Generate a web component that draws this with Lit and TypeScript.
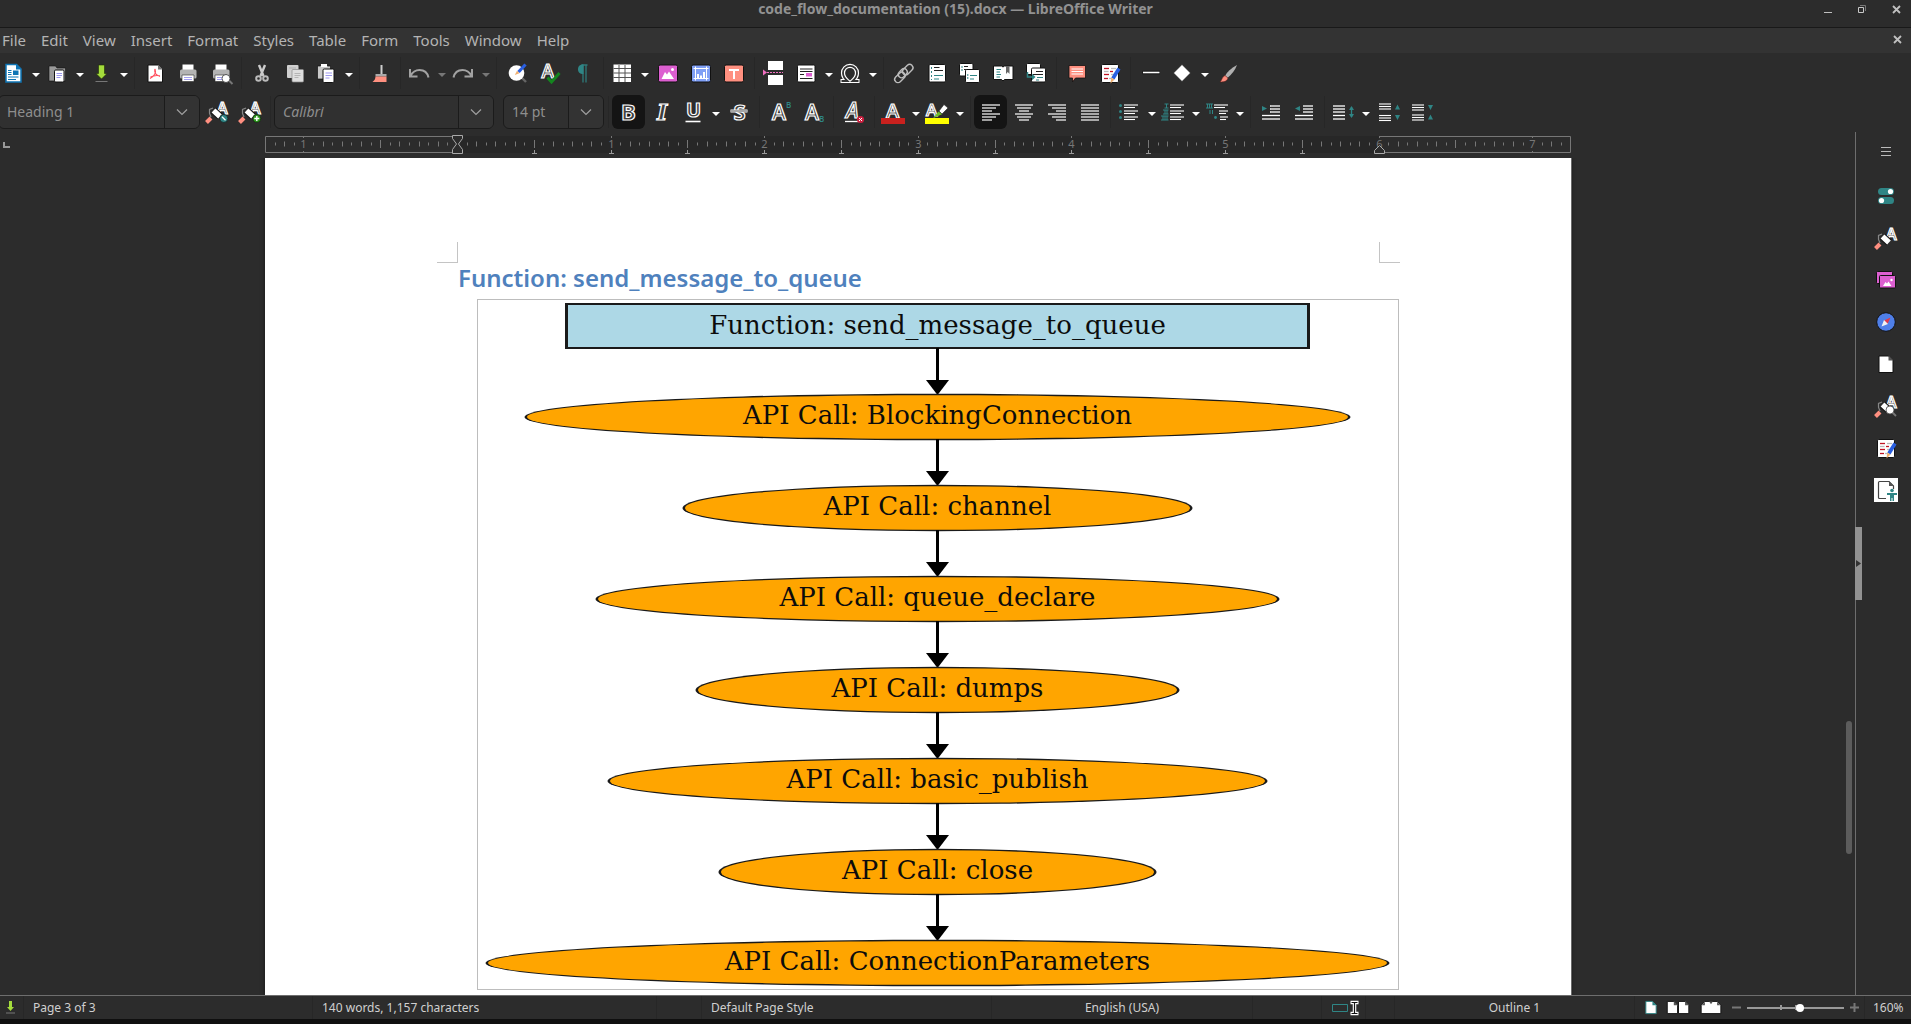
import { LitElement, html, svg, css, nothing, TemplateResult } from "lit";
import { customElement, property } from "lit/decorators.js";
import { classMap } from "lit/directives/class-map.js";

const outlined = (ch: string, x: number, y: number, size: number, extra = "") =>
  svg`<text class="glyph ${extra}" x=${x} y=${y} font-size=${size}>${ch}</text>`;

const page = (x: number, y: number, w: number, h: number, fill = "#fff") =>
  svg`<rect x=${x} y=${y} width=${w} height=${h} rx="1.2" fill=${fill} stroke="#111" stroke-width="1"/>`;

const lines = (rows: number[][], color: string, width = 1) =>
  rows.map(([x1, x2, y]) => svg`<path d="M${x1} ${y}H${x2}" stroke=${color} stroke-width=${width}/>`);

const pencil = svg`
  <path d="M19.500 6.500l3 2-6 10-3.200-2z" fill="#2a5fe0"/>
  <path d="M13.300 16.500l3.200 2-4 4z" fill="#f0b070"/>`;

const roller = svg`
  <path d="M6 17L4.500 13.500V9.500L8 8" fill="none" stroke="#888" stroke-width="1.200"/>
  <path d="M1.500 22.500L6 18" stroke="#ff8f80" stroke-width="4"/>
  <path d="M8.500 10.500L15 16.500" stroke="#111" stroke-width="7.500"/>
  <path d="M8.500 10.500L15 16.500" stroke="#fff" stroke-width="5.500"/>`;

const printer = svg`
  <path d="M6.500 3.500h11V9h-11z" fill="#fff"/>
  <rect x="4" y="8.500" width="16.500" height="9" rx="1.5" fill="#b3b3b3"/>
  <path d="M6 14h12v6.500H6z" fill="#fff" stroke="#2c2c2c" stroke-width=".6"/>
  <path d="M8 16.500h8M8 18.500h8" stroke="#a5a0f0"/>`;

const GREEN = "#2f8585";

const ICONS: Record<string, TemplateResult> = {
  newdoc: svg`
    <path d="M5 3.500h10.500L20 8v13H5z" fill="#fff" stroke="#0f75b5" stroke-width="1.500"/>
    <path d="M15 3l5.500 5.500H15z" fill="#0f75b5"/>
    <path d="M12 9.500h5.500V14H12z" fill="#0f75b5"/>
    <path d="M7 9.500h3.500M7 11.500h3.500M7 13.500h3.500M7 16h10.500M7 18.500h8" stroke="#0f75b5"/>`,
  open: svg`
    <path d="M4 5h6.500l1.500 2h8.500v13H4z" fill="#999" stroke="#111" stroke-width=".6"/>
    ${page(9.5, 9, 9.5, 12)}
    <path d="M11.500 12.500h5.500M11.500 14.500h5.500M11.500 16.500h4" stroke="#9c97ee"/>`,
  save: svg`
    <path d="M9.500 4h6v8.500h2.500L12.500 18 7 12.500h2.500z" fill="#a4dc3c" stroke="#1d2b05" stroke-width=".6"/>
    <path d="M6.500 20.500h12" stroke="#777"/>`,
  pdf: svg`
    <path d="M5 4h10.500l4 4v13H5z" fill="#fff" stroke="#111"/>
    <path d="M15 3.800l4.700 4.700H15z" fill="#777"/>
    <path d="M12 8c-1 3 .5 6 5 7.500M12 8c1.500 4-1.500 7.500-5 9.500M7.500 16c3-1.500 6-2 9.500-1.200" fill="none" stroke="#ff4d5c" stroke-width="1.100"/>`,
  print: printer,
  preview: svg`${printer}<path d="M20 19.500l3.500 3.500" stroke="#777" stroke-width="2"/><circle cx="17" cy="17.500" r="4" fill="#fff" stroke="#333" stroke-width=".8"/>`,
  cut: svg`
    <path d="M9 4l4.500 11M15 4l-4.500 11" stroke="#ccc" stroke-width="2.400"/>
    <circle cx="8.500" cy="17.500" r="2.300" fill="none" stroke="#bbb" stroke-width="2"/>
    <circle cx="15.500" cy="17.500" r="2.300" fill="none" stroke="#bbb" stroke-width="2"/>`,
  copy: svg`
    <rect x="4" y="4" width="11.500" height="13" rx="1" fill="#d0d0d0"/>
    <rect x="9" y="8.500" width="11.500" height="12.500" rx="1" fill="#dedede" stroke="#8a8a8a" stroke-width=".7"/>
    <path d="M6 7h7M11.500 12.500h6M11.500 14.500h6M11.500 16.500h4" stroke="#aaa" stroke-width=".8"/>`,
  paste: svg`
    <path d="M3.500 5h3l1.500-1.500h4L13.500 5h3v13h-13z" fill="#c9c9c9" stroke="#111" stroke-width=".7"/>
    <path d="M7 3h6v3H7z" fill="#fff"/>
    ${page(9, 8, 11, 13.5)}
    <path d="M11.500 12h6.500M11.500 14.500h6.500M11.500 17h4" stroke="#9c97ee"/>`,
  clone: svg`
    <path d="M13.500 4v9" stroke="#ccc" stroke-width="2"/>
    <path d="M7.500 15.500v-2.500h11v2.500z" fill="#aaa"/>
    <path d="M7.500 15.500h11v5.500H4.500c2-1.500 2.800-3 3-5.500z" fill="#ff9080"/>`,
  undo: svg`<path d="M3 8v7.500h7.500M3.500 15C6 10 9 9 12.500 9c5 0 8 3 9 7.500" fill="none" stroke="#a2a2a2" stroke-width="2"/>`,
  redo: svg`<path d="M21 8v7.500h-7.500M20.500 15C18 10 15 9 11.500 9c-5 0-8 3-9 7.500" fill="none" stroke="#a2a2a2" stroke-width="2"/>`,
  find: svg`
    <path d="M17 17l4 4" stroke="#666" stroke-width="2.400"/>
    <circle cx="11.500" cy="12" r="7.800" fill="#fff"/>
    <path d="M20.500 3.500l-7 7.500" stroke="#2a5fe0" stroke-width="3.200"/>
    <path d="M14.500 12.200L12 9.800 9.800 14z" fill="#f0b070"/>`,
  spell: svg`${outlined("A", 3.5, 17, 19)}<path d="M9.500 16.500l4 4.500 8-9" fill="none" stroke="#14851f" stroke-width="3"/>`,
  pilcrow: svg`
    <path d="M12 3.500v18M15 3.500v18M10.500 4h6" stroke="#2f7a7a" stroke-width="1.300"/>
    <path d="M12.500 3.500c-4 0-5.500 2-5.500 4.700S8.500 13 12.500 13z" fill="#2f8585"/>`,
  table: svg`
    <rect x="3.500" y="3.500" width="17.500" height="17.500" fill="#fff"/>
    <path d="M3.500 7.500h17.500M3.500 12h17.500M3.500 16.500h17.500M9 4v17M15 4v17" stroke="#555" stroke-width="1"/>`,
  image: svg`
    <rect x="2.500" y="4" width="19" height="17" rx="1.500" fill="#dc5fd0" stroke="#111"/>
    <path d="M5.500 18l3.500-7 2 2.500 2-3 5 7.500z" fill="#fff"/><circle cx="16.500" cy="8.500" r="1.500" fill="#fff"/>`,
  chart: svg`
    <rect x="2.500" y="4" width="19" height="17" rx="1.500" fill="#7f9ff5" stroke="#111"/>
    <path d="M6.500 5.500v14M17.500 5.500v14M4.500 7.500h15M4.500 17.500h15" stroke="#fff"/>
    <path d="M9 17v-4M12 17v-2.500M15 17v-6" stroke="#fff" stroke-width="2"/>`,
  textbox: svg`
    <rect x="2.500" y="4" width="19" height="17" rx="1.500" fill="#ff9080" stroke="#111"/>
    <path d="M7 9h10M12 9v9" stroke="#fff" stroke-width="2"/>`,
  pagebreak: svg`
    <path d="M5 0h15v9H5zM5 14h15v10H5z" fill="#fff"/>
    <path d="M4 11.500h16" stroke="#f06fc0" stroke-dasharray="2 1"/><path d="M0 8.500v6l4-3z" fill="#f06fc0"/>`,
  field: svg`
    <rect x="3.500" y="4" width="17.500" height="17" rx="1.200" fill="#fff" stroke="#111"/>
    <path d="M6 8h12.500M6 10.500h12.500M6 13.500h4M6 17.500h12.500" stroke="#222" stroke-width="1.100"/>
    <path d="M12 12h6v3.500h-6z" fill="#dc5fd0"/>`,
  omega: svg`
    <path d="M2.500 20h7c-3-2.500-4.500-5-4.500-8a7 7.200 0 0114 0c0 3-1.500 5.500-4.500 8h7" fill="none" stroke="#fff" stroke-width="4.200"/>
    <path d="M3.500 20h6c-3-2.500-4.500-5-4.500-8a7 7.200 0 0114 0c0 3-1.500 5.500-4.500 8h6" fill="none" stroke="#333" stroke-width="1.800"/>`,
  link: svg`
    <g transform="rotate(-45 12 12)" fill="none" stroke="#bdbdbd" stroke-width="1.400">
      <rect x="0" y="9" width="12" height="6.500" rx="3.200"/><rect x="6" y="8" width="10" height="6.500" rx="3.200"/>
      <rect x="11" y="9" width="12" height="6.500" rx="3.200"/></g>`,
  footnote: svg`${page(4, 3.5, 16.5, 17.5)}
    ${lines([[9, 14.5, 6.5], [9, 18, 9.5]], "#222")}${lines([[9, 18, 14.5], [9, 14, 18]], GREEN)}
    <path d="M6.500 6v13" stroke="#2f8585" stroke-dasharray="2 2"/>`,
  endnote: svg`${page(1.5, 2.5, 13.5, 12.5)}${lines([[6, 10, 5.5], [6, 13, 8.5]], "#222")}
    ${page(7.5, 8.5, 14, 13)}${lines([[12, 19, 14.5], [12, 16, 18]], GREEN)}
    <path d="M4 5v5M9.800 13v6" stroke="#2f8585" stroke-dasharray="2 1"/>`,
  bookmark: svg`
    <path d="M2.500 5h8l1.500 1 1.500-1h8.500v13.500h-8.500L12 20l-1.500-1.500h-8z" fill="#fff" stroke="#111"/>
    ${lines([[5.5, 10, 8.5], [5.5, 9, 11], [5.5, 10, 13.5], [5.5, 9, 16]], GREEN)}
    <path d="M15 5h3.500v8l-1.700-2-1.800 2z" fill="#666"/>`,
  crossref: svg`${page(2.5, 2.5, 14, 11)}${page(7.5, 7, 14, 14)}
    ${lines([[12, 19, 10.5], [9, 19, 13.5]], "#222")}${lines([[13, 19, 16.5], [12, 15, 19]], GREEN)}
    <path d="M3.500 11v5H9" fill="none" stroke="#2f8585" stroke-width="1.500"/><path d="M8 12.800v6.400l3.500-3.200z" fill="#2f8585"/>`,
  comment: svg`
    <path d="M4 4.500h16.500v12.500h-10l-3 4v-4H4z" fill="#ff9080" stroke="#111" stroke-width=".8"/>
    ${lines([[6.5, 18, 8], [6.5, 18, 10.5], [6.5, 18, 13]], "#fff")}`,
  track: svg`${page(3.5, 3.5, 17, 18)}
    ${lines([[6, 11, 7.5], [12, 15, 10.5], [6, 11, 13.5], [6, 10, 17.5]], "#c01525", 1.3)}
    ${lines([[13, 18, 7.5], [6, 10.5, 10.5], [13, 17, 13.5], [11, 14, 17.5]], "#bbb", 1.3)}${pencil}`,
  line: svg`<path d="M3.500 11.500h17.500" stroke="#111" stroke-width="3.500"/><path d="M4 11.500h16.500" stroke="#fff" stroke-width="1.600"/>`,
  shapes: svg`<path d="M12 3.500l8.500 8.500-8.500 8.500L3.500 12z" fill="#fff" stroke="#111" stroke-width=".6"/>`,
  brush: svg`
    <path d="M21 4C15 7 11 11 9 15l2.500 2C16 13 19 9.500 21 4z" fill="#b0b0b0"/>
    <path d="M9 14.500l3 2.500c-1 3.500-4 4-8 4 2-1.500 2-5.500 5-6.500z" fill="#ff8f80" stroke="#5b1d18" stroke-width=".6"/>`,
  styleUpdate: svg`${outlined("A", 12, 13.5, 16)}${roller}
    <circle cx="18.800" cy="18.500" r="4" fill="#2f8585" stroke="#111" stroke-width=".6"/><path d="M17 16.800l3.500 3.500" stroke="#fff" stroke-width="1.300"/>`,
  styleNew: svg`${outlined("A", 12, 13.5, 16)}${roller}
    <circle cx="18.800" cy="18.500" r="4" fill="#2c9a1c" stroke="#111" stroke-width=".6"/><path d="M16.300 18.500h5M18.800 16v5" stroke="#fff" stroke-width="1.400"/>`,
  bold: outlined("B", 4, 20, 22, "heavy"),
  italic: outlined("I", 7, 20, 22, "serif ital"),
  underline: svg`${outlined("U", 5, 17, 20, "heavy")}<path d="M4.500 21.500h15" stroke="#fff" stroke-width="1.600"/>`,
  strike: svg`${outlined("S", 6.5, 20, 22, "heavy")}<path d="M3.500 11h17" stroke="#fff" stroke-width="3"/><path d="M4 11h16" stroke="#222" stroke-width=".8"/>`,
  sup: svg`${outlined("A", 4, 20, 21)}<text class="tiny" x="18" y="8" font-size="8">B</text>`,
  sub: svg`${outlined("A", 4, 20, 21)}<text class="tiny" x="18" y="21.500" font-size="8">B</text>`,
  clear: svg`${outlined("A", 4, 18, 21, "ital")}<path d="M3 21.500h14" stroke="#fff" stroke-width="1.300"/>
    <circle cx="18.500" cy="19.500" r="3.600" fill="#cc2040"/><path d="M17 18l3 3M20 18l-3 3" stroke="#fff"/>`,
  color: svg`${outlined("A", 5, 18, 20)}<path d="M0 18h24v6H0z" fill="#c9211e"/>`,
  highlight: svg`${outlined("A", 1, 16, 17)}<path d="M0 18h24v6H0z" fill="#ff0"/>
    <path d="M14 11l5-6.500 4 3.500-6 6z" fill="#fff" stroke="#222" stroke-width=".6"/><path d="M13.500 11.500l3.500 2.800-9 4z" fill="#6fbf2a"/>`,
  alignLeft: svg`${lines([[3, 21, 5], [3, 17, 8], [3, 13, 11], [3, 21, 14], [3, 17, 17], [3, 13, 20]], "#fff", 1.2)}`,
  alignCenter: svg`${lines([[3, 21, 5], [5, 19, 8], [7, 17, 11], [3, 21, 14], [5, 19, 17], [7, 17, 20]], "#fff", 1.2)}`,
  alignRight: svg`${lines([[3, 21, 5], [7, 21, 8], [11, 21, 11], [3, 21, 14], [7, 21, 17], [11, 21, 20]], "#fff", 1.2)}`,
  alignJustify: svg`${lines([[3, 21, 5], [3, 21, 8], [3, 21, 11], [3, 21, 14], [3, 21, 17], [3, 21, 20]], "#fff", 1.2)}`,
  bullets: svg`${lines([[7, 21, 5], [7, 18, 7.5], [7, 21, 11], [7, 18, 13.5], [7, 21, 17], [7, 18, 19.5]], "#fff", 1.1)}
    <circle cx="3.500" cy="5.500" r="1.500" fill="#2f8585"/><circle cx="3.500" cy="11.500" r="1.500" fill="#2f8585"/><circle cx="3.500" cy="17.500" r="1.500" fill="#2f8585"/>`,
  numbers: svg`${lines([[9, 23, 5], [9, 20, 7.5], [9, 23, 11], [9, 20, 13.5], [9, 23, 17], [9, 20, 19.5]], "#fff", 1.1)}
    <path d="M3.500 4h4M3.500 8h4M5.500 4v4M2 10h5.500M2 14h5.500M4 10v4M6 10v4M0 16h7.500M0 20h7.500M2 16v4M4 16v4M6 16v4" stroke="#2f8585"/>`,
  outline: svg`${lines([[9, 23, 5], [9, 20, 7.5], [14, 23, 11], [14, 21, 13.5], [15, 23, 17], [15, 21, 19.5]], "#fff", 1.1)}
    <path d="M1 4h7M1 8h7M2.500 4v4M4.500 4v4M6.500 4v4M5 10v4M7.500 10v4" stroke="#2f8585"/><circle cx="10.500" cy="17.500" r="1.400" fill="#2f8585"/>`,
  indent: svg`${lines([[11, 21, 6], [11, 21, 9], [11, 21, 12], [3, 21, 15.5], [3, 21, 19]], "#fff", 1.3)}<path d="M3 6v5l5-2.500z" fill="#2f8585"/>`,
  outdent: svg`${lines([[11, 21, 6], [11, 21, 9], [11, 21, 12], [3, 21, 15.5], [3, 21, 19]], "#fff", 1.3)}<path d="M8 6v5L3 8.500z" fill="#2f8585"/>`,
  spacing: svg`${lines([[2, 14, 6], [2, 14, 9], [2, 14, 12], [2, 14, 15.5], [2, 14, 19]], "#fff", 1.3)}
    <path d="M20.500 7v10" stroke="#2f8585" stroke-width="1.300"/><path d="M18 10l2.500-4 2.500 4zM18 14l2.500 4 2.500-4z" fill="#2f8585"/>`,
  paraInc: svg`${lines([[2, 14, 4], [2, 14, 6.5], [2, 14, 9], [2, 14, 15.5], [2, 14, 18], [2, 14, 20.5]], "#fff", 1.1)}
    <path d="M18 9.500l2.500-5 2.500 5zM18 15l2.500 5 2.500-5z" fill="#2f8585"/>`,
  paraDec: svg`${lines([[2, 14, 5], [2, 14, 7.5], [2, 14, 10], [2, 14, 15], [2, 14, 17.5], [2, 14, 20]], "#fff", 1.1)}
    <path d="M18 5l2.500 5 2.500-5zM18 19.500l2.500-5 2.500 5z" fill="#2f8585"/>`,
  burger: svg`${lines([[7, 17, 7.5], [7, 17, 11.5], [7, 17, 15.5]], "#bbb")}`,
  properties: svg`
    <rect x="4" y="4" width="16" height="7" rx="3.500" fill="#2f8585"/><circle cx="16.500" cy="7.500" r="2.600" fill="#fff"/>
    <rect x="4" y="13" width="16" height="7" rx="3.500" fill="#2f8585"/><circle cx="7.500" cy="16.500" r="2.600" fill="#fff"/>`,
  styles: svg`${outlined("A", 12, 13.5, 16)}${roller}`,
  gallery: svg`
    <rect x="2.500" y="3.500" width="16" height="12" rx="1" fill="#dc5fd0" stroke="#111"/>
    <rect x="5.500" y="7.500" width="16" height="12.500" rx="1" fill="#dc5fd0" stroke="#111"/>
    <path d="M9 18l2.500-4 1.500 1.500 1.500-2L17.500 18z" fill="#fff"/><circle cx="17.500" cy="12" r="1.200" fill="#fff"/>`,
  navigator: svg`
    <circle cx="12" cy="12" r="9.300" fill="#4f7fe8" stroke="#111"/>
    <path d="M16.500 7.500L13.500 14 10 10.500z" fill="#e03a4a"/><path d="M7.500 16.500L10 10l4 4z" fill="#f2f2f2"/>`,
  pagePane: svg`
    <path d="M5 4h9.500l4.500 4.500V20.500H5z" fill="#fff" stroke="#111"/><path d="M14.500 3.500l5 5h-5z" fill="#555"/>`,
  inspector: svg`${outlined("A", 12, 13.5, 16)}${roller}
    <path d="M18.500 18.500l3.500 3.500" stroke="#777" stroke-width="1.800"/><circle cx="16" cy="16" r="4" fill="#fff" stroke="#444" stroke-width=".8"/>`,
  a11y: svg`
    <rect width="24" height="24" fill="#fff"/>
    <path d="M12 20.500H5.500q-1 0-1-1V4.500q0-1 1-1H15l4.500 4.500v3" fill="none" stroke="#444" stroke-width="1.200"/>
    <path d="M15 3v5h5z" fill="#555"/><circle cx="18" cy="12.500" r="1.800" fill="#2f8585"/>
    <path d="M13 15h10v2h-3v6h-1.500v-3h-1v3H16v-6h-3z" fill="#2f8585"/>`,
};

@customElement("ui-icon")
class UiIcon extends LitElement {
  @property() name = "";
  static styles = css`
    :host { display: block; width: 24px; height: 24px; }
    svg { display: block; overflow: visible; }
    .glyph { font-family: "Open Sans", sans-serif; font-weight: 600; fill: #3c3c3c; stroke: #fff; stroke-width: 1.2px; }
    .heavy { font-weight: 700; }
    .serif { font-family: "DejaVu Serif", serif; font-weight: 700; }
    .ital { font-style: italic; }
    .tiny { font-family: "Open Sans", sans-serif; fill: #2f8585; font-weight: 600; }
  `;
  render() {
    return html`<svg width="24" height="24" viewBox="0 0 24 24" aria-hidden="true">${ICONS[this.name] ?? nothing}</svg>`;
  }
}

interface Tool { icon?: string; label?: string; split?: boolean; dim?: boolean; on?: boolean; combo?: string; sep?: boolean; options?: string[]; }
const S: Tool = { sep: true };
const t = (icon: string, label: string, more: Tool = {}): Tool => ({ icon, label, ...more });
const split = { split: true };

const STANDARD: Tool[] = [
  t("newdoc", "New", split), t("open", "Open", split), t("save", "Save", split), S,
  t("pdf", "Export as PDF"), t("print", "Print"), t("preview", "Print Preview"), S,
  t("cut", "Cut"), t("copy", "Copy"), t("paste", "Paste", split), S,
  t("clone", "Clone Formatting"), S,
  t("undo", "Undo", { split: true, dim: true }), t("redo", "Redo", { split: true, dim: true }), S,
  t("find", "Find and Replace"), t("spell", "Spelling"), t("pilcrow", "Formatting Marks"), S,
  t("table", "Insert Table", split), t("image", "Insert Image"), t("chart", "Insert Chart"), t("textbox", "Insert Text Box"), S,
  t("pagebreak", "Insert Page Break"), t("field", "Insert Field", split), t("omega", "Insert Special Character", split), S,
  t("link", "Insert Hyperlink"), t("footnote", "Insert Footnote"), t("endnote", "Insert Endnote"), t("bookmark", "Insert Bookmark"), t("crossref", "Insert Cross-reference"), S,
  t("comment", "Insert Comment"), t("track", "Track Changes"), S,
  t("line", "Insert Line"), t("shapes", "Basic Shapes", split), t("brush", "Show Draw Functions"),
];

const FORMATTING: Tool[] = [
  { combo: "style", label: "Paragraph Style", options: ["Heading 1"] },
  t("styleUpdate", "Update Style"), t("styleNew", "New Style"), S,
  { combo: "font", label: "Font Name", options: ["Calibri"] },
  { combo: "size", label: "Font Size", options: ["14 pt"] }, S,
  t("bold", "Bold", { on: true }), t("italic", "Italic"), t("underline", "Underline", split), t("strike", "Strikethrough"), S,
  t("sup", "Superscript"), t("sub", "Subscript"), S,
  t("clear", "Clear Direct Formatting"), S,
  t("color", "Font Color", split), t("highlight", "Highlighting", split), S,
  t("alignLeft", "Align Left", { on: true }), t("alignCenter", "Align Center"), t("alignRight", "Align Right"), t("alignJustify", "Justified"), S,
  t("bullets", "Unordered List", split), t("numbers", "Ordered List", split), t("outline", "Outline Format", split), S,
  t("indent", "Increase Indent"), t("outdent", "Decrease Indent"), S,
  t("spacing", "Line Spacing", split), t("paraInc", "Increase Paragraph Spacing"), t("paraDec", "Decrease Paragraph Spacing"),
];

@customElement("tool-bar")
class ToolBar extends LitElement {
  @property({ attribute: false }) tools: Tool[] = [];
  static styles = css`
    :host { display: flex; align-items: center; overflow: hidden; background: #2c2c2c; }
    .row { display: flex; align-items: center; margin-left: -2px; }
    button { border: 0; padding: 0; background: none; display: grid; place-items: center; height: 34px; width: 33px; flex: none; border-radius: 6px; }
    .main { width: 30px; }
    .drop { width: 14px; padding-left: 2px; }
    .on { background: #141414; }
    .sep { width: 1px; height: 32px; background: #272727; margin: 0 3px 0 4px; flex: none; }
    .arrow { width: 0; height: 0; border: 4px solid transparent; border-top-color: #fff; border-bottom: 0; margin-top: 4px; }
    .dim .arrow { border-top-color: #777; }
    .combo { position: relative; box-sizing: border-box; height: 34px; border: 1px solid #1b1b1b; border-radius: 6px; background: #303030; flex: none; overflow: hidden; }
    .style { width: 202px; }
    .font { width: 220px; margin-right: 9px; }
    .size { width: 101px; }
    select { appearance: none; width: 100%; height: 100%; border: 0; padding: 0 8px; background: none; color: #8e8e8e; font: 14px/20px "Noto Sans", "Open Sans", sans-serif; }
    .font select { font-style: italic; }
    .chev { position: absolute; right: 0; top: 0; bottom: 0; width: 34px; border-left: 1px solid #1b1b1b; background: #333; display: grid; place-items: center; pointer-events: none; }
  `;
  private item(tool: Tool) {
    if (tool.sep) return html`<span class="sep"></span>`;
    if (tool.combo) return html`
      <label class="combo ${tool.combo}">
        <select aria-label=${tool.label!}>${tool.options!.map((o) => html`<option>${o}</option>`)}</select>
        <span class="chev"><svg width="12" height="8" viewBox="0 0 12 8"><path d="M1 1.500l5 5 5-5" fill="none" stroke="#a0a0a0" stroke-width="1.200"/></svg></span>
      </label>`;
    const main = html`<button class=${classMap({ main: !!tool.split, on: !!tool.on })} aria-label=${tool.label!}><ui-icon name=${tool.icon!}></ui-icon></button>`;
    return tool.split
      ? html`${main}<button class=${classMap({ drop: true, dim: !!tool.dim })} aria-label="${tool.label} options"><span class="arrow"></span></button>`
      : main;
  }
  render() { return html`<div class="row">${this.tools.map((x) => this.item(x))}</div>`; }
}

@customElement("ruler-bar")
class RulerBar extends LitElement {
  static styles = css`
    :host { display: block; height: 26px; }
    svg { display: block; width: 100%; height: 26px; }
    text { font: 11px "Noto Sans", sans-serif; fill: #777; text-anchor: middle; }
  `;
  render() {
    const zero = 192;
    const inch = 153.6;
    const marks = [];
    for (let i = -19; i <= 118; i++) {
      const x = Math.round(zero + (i * inch) / 16) + 0.5;
      const whole = i % 16 === 0;
      const half = i % 8 === 0;
      if (x < 8 || x > 1300) continue;
      if (whole) {
        if (i !== 0) marks.push(svg`<text x=${x} y="16">${Math.abs(i / 16)}</text><path d="M${x} 4v2M${x} 19v2" stroke="#777"/>`);
      } else {
        const h = half ? 4 : i % 2 === 0 ? 2.5 : 1.5;
        marks.push(svg`<path d="M${x} ${12 - h}v${h * 2}" stroke="#777"/>`);
      }
      if (half && i > 0 && i < 96) marks.push(svg`<path d="M${x - 2.5} 21.500h5M${x} 18v3" stroke="#999"/>`);
    }
    return html`<svg viewBox="0 0 1306 26" aria-hidden="true">
      <rect x="192" y="4" width="922" height="17" fill="#272727"/>
      <path d="M192 4.500H.5v16H192M1114 4.500h191.500v16H1114" fill="none" stroke="#777"/>
      ${marks}
      <path d="M187.500 3.500h10v3l-4 5.500 4 5.500v4h-10v-4l4-5.500-4-5.500z" fill="#2c2c2c" stroke="#aaa"/>
      <path d="M1114.500 13.500l5 5v3h-10v-3z" fill="#2c2c2c" stroke="#aaa"/>
    </svg>`;
  }
}

const CALLS = [
  { name: "BlockingConnection", rx: 412 },
  { name: "channel", rx: 254 },
  { name: "queue_declare", rx: 341 },
  { name: "dumps", rx: 241 },
  { name: "basic_publish", rx: 329 },
  { name: "close", rx: 218 },
  { name: "ConnectionParameters", rx: 451 },
];

@customElement("flow-diagram")
class FlowDiagram extends LitElement {
  static styles = css`
    :host { display: block; border: 1px solid #bdbdbd; }
    svg { display: block; width: 100%; }
    text { font: 26px "DejaVu Serif", serif; text-anchor: middle; fill: #0c0c0c; }
  `;
  render() {
    const cx = 459.5;
    return html`<svg viewBox="0 0 920 689" role="img" aria-label="Call flow of send_message_to_queue">
      <rect x="87" y="3" width="745" height="46" fill="#1a1a1a"/>
      <rect x="90" y="5" width="739" height="42" fill="#add8e6"/>
      <text x=${cx} y="34">Function: send_message_to_queue</text>
      ${CALLS.map(({ name, rx }, i) => {
        const cy = 117 + i * 91;
        return svg`
          <path d="M${cx} ${cy - 69}v34" stroke="#000" stroke-width="3"/>
          <path d="M${cx - 11.5} ${cy - 37}h23l-11.500 15z" fill="#000"/>
          <ellipse cx=${cx} cy=${cy} rx=${rx + 1} ry="23.300" fill="#1a1a1a"/>
          <ellipse cx=${cx} cy=${cy} rx=${rx - 1.5} ry="21.800" fill="#ffa500"/>
          <text x=${cx} y=${cy + 7}>API Call: ${name}</text>`;
      })}
    </svg>`;
  }
}

const MENUS = ["File", "Edit", "View", "Insert", "Format", "Styles", "Table", "Form", "Tools", "Window", "Help"];
const PANES = [
  ["properties", "Properties"], ["styles", "Styles"], ["gallery", "Gallery"], ["navigator", "Navigator"],
  ["pagePane", "Page"], ["inspector", "Style Inspector"], ["track", "Manage Changes"], ["a11y", "Accessibility Check"],
];

@customElement("app-root")
class AppRoot extends LitElement {
  static styles = css`
    :host { display: flex; flex-direction: column; height: 100vh; overflow: hidden; background: #2c2c2c; color: #b4b4b4; font: 14px/20px "Noto Sans", "Open Sans", sans-serif; }
    button { border: 0; padding: 0; background: none; color: inherit; font: inherit; }
    svg { display: block; }
    .title { display: grid; grid-template-columns: 1fr auto 1fr; height: 27px; border-bottom: 1px solid #191919; flex: none; }
    h1 { grid-column: 2; margin: 0; font-size: 14px; line-height: 18px; font-weight: 700; color: #929292; }
    .win { display: flex; justify-content: flex-end; height: 18px; padding-right: 2px; gap: 8px; }
    .win button { width: 26px; display: grid; place-items: center; }
    .menubar { display: flex; align-items: center; box-sizing: border-box; height: 25px; background: #333; padding: 0 9px 2px 2px; flex: none; }
    nav { display: flex; gap: 15px; flex: 1; }
    nav button { font-size: 15px; }
    .standard { height: 39px; flex: none; }
    .formatting { height: 40px; flex: none; }
    .work { display: flex; flex: 1; min-height: 0; }
    .editor { flex: 1; min-width: 0; display: flex; flex-direction: column; }
    .rulerrow, .view { display: grid; grid-template-columns: 1fr 1306px 1fr 19px; }
    .tabstop { width: 5px; height: 4px; border: solid #999; border-width: 0 0 2px 2px; margin: 10px 0 0 3px; }
    .view { flex: 1; min-height: 0; overflow: hidden; }
    .paper { grid-column: 2; background: #fff; box-shadow: 1px 0 0 #6a6a6a, 0 0 4px #141414; box-sizing: border-box; padding: 84px 171px 0 172px; overflow: hidden; }
    .corners { display: flex; justify-content: space-between; }
    .corner { width: 20px; height: 20px; border: solid #c4c4c4; border-width: 0 1px 1px 0; }
    .corner.right { border-width: 0 0 1px 1px; }
    h2 { margin: 0 0 6px 21px; font-size: 24px; line-height: 30px; font-weight: 600; color: #4f81bd; }
    flow-diagram { margin: 0 2px 0 40px; width: 920px; }
    .track { grid-column: 4; display: flex; flex-direction: column; padding-left: 10px; }
    .before { flex: 562; }
    .thumb { flex: 133; width: 6px; border-radius: 3px; background: #5c5c5c; }
    .after { flex: 141; }
    aside { position: relative; width: 50px; padding-left: 5px; border-left: 1px solid #6e6e6e; display: flex; flex-direction: column; align-items: center; flex: none; }
    aside button { width: 34px; height: 42px; display: grid; place-items: center; }
    aside .burger { height: 40px; margin-bottom: 3px; }
    aside .grab { position: absolute; left: -1px; top: 395px; width: 7px; height: 73px; background: #929292; }
    .status { display: grid; grid-template-columns: 24px 289fr 344fr 45fr 290fr 261fr 69fr 44fr 29fr 240fr 230px 46px; height: 23px; border-top: 1px solid #6e6e6e; border-bottom: 5px solid #0f0f0f; flex: none; font-size: 12px; line-height: 22px; color: #d0d0d0; }
    .cell { border-right: 1px solid #272727; padding-left: 9px; white-space: nowrap; display: flex; align-items: center; box-sizing: border-box; min-width: 0; }
    .cell.mid { justify-content: center; padding-left: 0; }
    .cell.first { padding-left: 5px; }
    .cell:last-child { border: 0; padding-left: 8px; }
    .zoom button { display: grid; place-items: center; height: 18px; }
    .zoom { padding-left: 10px; }
    .views { display: flex; gap: 9px; margin-right: 10px; }
    .zoom input { appearance: none; margin: 0 6px; width: 97px; height: 12px; background:
      linear-gradient(#999, #999) 33px 50% / 2px 5px no-repeat, linear-gradient(#999, #999) 48px 50% / 2px 5px no-repeat,
      linear-gradient(#999, #999) 0 50% / 100% 2px no-repeat; }
    .zoom input::-webkit-slider-thumb { appearance: none; width: 8px; height: 8px; border-radius: 4px; background: #fff; }
  `;
  private cross = html`<svg width="9" height="9" viewBox="0 0 9 9"><path d="M1 1l7 7M8 1L1 8" stroke="#c0c0c0" stroke-width="1.800"/></svg>`;
  private leaf(x: number, stroke: string) {
    return svg`<path d="M${x + 0.5} 1.500h7l4 4v9h-11z" fill="#fff" stroke=${stroke}/><path d="M${x + 7.5} 1l4.500 4.500h-4.500z" fill=${stroke === "#111" ? "#555" : stroke}/>`;
  }
  render() {
    return html`
      <header class="title">
        <h1>code_flow_documentation (15).docx — LibreOffice Writer</h1>
        <div class="win">
          <button aria-label="Minimize"><svg width="8" height="9" viewBox="0 0 8 9"><path d="M0 7.500h8" stroke="#c0c0c0"/></svg></button>
          <button aria-label="Restore"><svg width="8" height="8" viewBox="0 0 8 8"><path d="M.5 2.500h5v5h-5z" fill="none" stroke="#c8c8c8"/><path d="M2 .5h5.500V6" fill="none" stroke="#777"/></svg></button>
          <button aria-label="Close">${this.cross}</button>
        </div>
      </header>
      <div class="menubar">
        <nav aria-label="Menu">${MENUS.map((m) => html`<button>${m}</button>`)}</nav>
        <button aria-label="Close Document">${this.cross}</button>
      </div>
      <tool-bar class="standard" .tools=${STANDARD}></tool-bar>
      <tool-bar class="formatting" .tools=${FORMATTING}></tool-bar>
      <div class="work">
        <div class="editor">
          <div class="rulerrow"><div class="tabstop"></div><ruler-bar></ruler-bar></div>
          <div class="view">
            <main class="paper">
              <div class="corners"><div class="corner"></div><div class="corner right"></div></div>
              <h2>Function: send_message_to_queue</h2>
              <flow-diagram></flow-diagram>
            </main>
            <div class="track"><div class="before"></div><div class="thumb"></div><div class="after"></div></div>
          </div>
        </div>
        <aside>
          <button class="burger" aria-label="Sidebar Settings"><ui-icon name="burger"></ui-icon></button>
          ${PANES.map(([icon, label]) => html`<button aria-label=${label}><ui-icon name=${icon}></ui-icon></button>`)}
          <button class="grab" aria-label="Hide Sidebar"><svg width="5" height="7" viewBox="0 0 5 7"><path d="M0 0l5 3.500L0 7z" fill="#333"/></svg></button>
        </aside>
      </div>
      <footer class="status">
        <div class="cell first"><svg width="11" height="13" viewBox="0 0 11 13"><path d="M4 0h3v6h2L5.500 10 2 6h2z" fill="#a4dc3c"/><path d="M1 12h9" stroke="#777"/></svg></div>
        <div class="cell">Page 3 of 3</div>
        <div class="cell">140 words, 1,157 characters</div>
        <div class="cell"></div>
        <div class="cell">Default Page Style</div>
        <div class="cell mid">English (USA)</div>
        <div class="cell"></div>
        <div class="cell"><svg width="30" height="16" viewBox="0 0 30 16">
          <path d="M1.500 4.500h15v7h-15z" fill="none" stroke="#2f8585"/>
          <path d="M19.500 2.500h8M19.500 13.500h8M23.500 2v12" stroke="#fff" stroke-width="3.500"/>
          <path d="M20.500 2.500h6M20.500 13.500h6M23.500 2v12" stroke="#111" stroke-width="1.200"/></svg></div>
        <div class="cell"></div>
        <div class="cell mid">Outline 1</div>
        <div class="cell zoom">
          <div class="views">
            <button aria-label="Single-page view"><svg width="12" height="15" viewBox="0 0 12 16">${this.leaf(0, "#2f8585")}</svg></button>
            <button aria-label="Multiple-page view"><svg width="25" height="15" viewBox="0 0 25 16">${this.leaf(0, "#111")}${this.leaf(12, "#111")}</svg></button>
            <button aria-label="Book view"><svg width="22" height="15" viewBox="0 0 22 16"><path d="M.5 5.500l4-4h13l4 4v9H.5z" fill="#fff" stroke="#111"/><path d="M1 5.500L4.500 2v3.500zM21 5.500L17.500 2v3.500zM9 1.500h4l-2 3z" fill="#555"/></svg></button>
          </div>
          <button aria-label="Zoom Out"><svg width="9" height="9" viewBox="0 0 9 9"><path d="M0 4.500h9" stroke="#777" stroke-width="2"/></svg></button>
          <input type="range" aria-label="Zoom" min="0" max="100" value="55" />
          <button aria-label="Zoom In"><svg width="9" height="9" viewBox="0 0 9 9"><path d="M0 4.500h9M4.500 0v9" stroke="#777" stroke-width="2"/></svg></button>
        </div>
        <div class="cell">160%</div>
      </footer>`;
  }
}
